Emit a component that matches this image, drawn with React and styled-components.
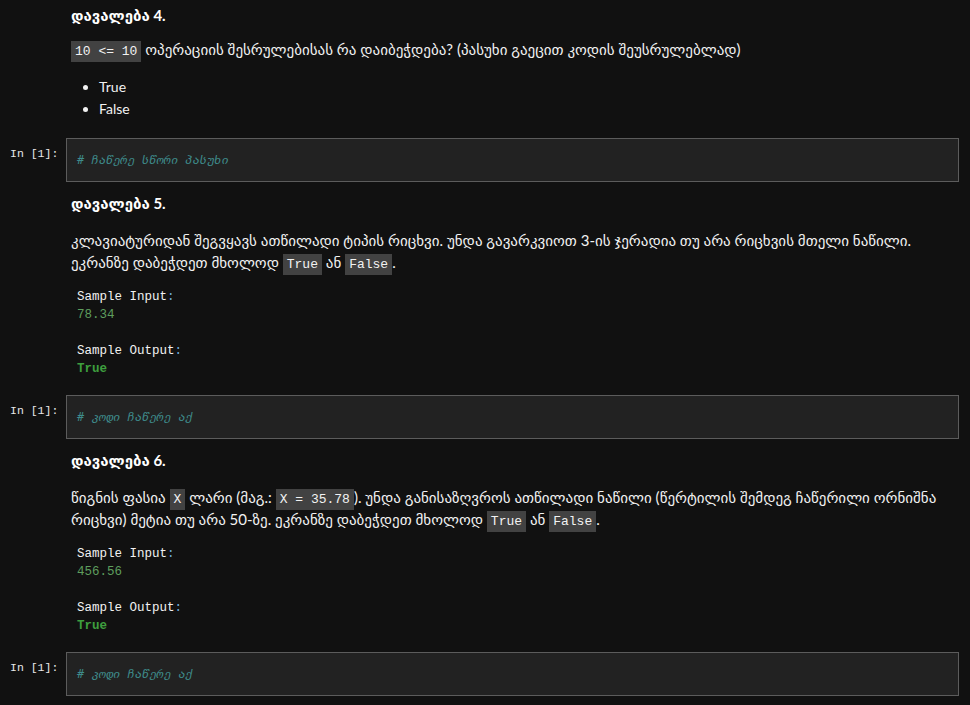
import React from 'react'
import styled, { createGlobalStyle } from 'styled-components'

const GlobalStyle = createGlobalStyle`
  html, body {
    margin: 0;
    padding: 0;
    background: #111111;
  }
  body {
    color: #f2f2f2;
    font-family: Lato, "DejaVu Sans", sans-serif;
    font-size: 14px;
  }
`

const tasks = [
  {
    title: 'დავალება 5.',
    text: () => (
      <>
        კლავიატურიდან შეგვყავს ათწილადი ტიპის რიცხვი. უნდა გავარკვიოთ 3-ის ჯერადია თუ არა რიცხვის მთელი ნაწილი.
        <br />
        ეკრანზე დაბეჭდეთ მხოლოდ <Code>True</Code> ან <Code>False</Code>.
      </>
    ),
    input: '78.34',
    output: 'True',
    comment: '# კოდი ჩაწერე აქ'
  },
  {
    title: 'დავალება 6.',
    text: () => (
      <>
        წიგნის ფასია <Code>X</Code> ლარი (მაგ.: <Code>X = 35.78</Code>). უნდა განისაზღვროს ათწილადი ნაწილი (წერტილის შემდეგ ჩაწერილი ორნიშნა
        <br />
        რიცხვი) მეტია თუ არა 50-ზე. ეკრანზე დაბეჭდეთ მხოლოდ <Code>True</Code> ან <Code>False</Code>.
      </>
    ),
    input: '456.56',
    output: 'True',
    comment: '# კოდი ჩაწერე აქ'
  }
]

function CodeCell({ comment }) {
  return (
    <CodeRow>
      <Prompt>In [1]:</Prompt>
      <InputBox>
        <Comment>{comment}</Comment>
      </InputBox>
    </CodeRow>
  )
}

function Sample({ input, output }) {
  return (
    <Pre>
      <div>Sample Input<Punct>:</Punct></div>
      <NumberLine>{input}</NumberLine>
      <div>&nbsp;</div>
      <div>Sample Output<Punct>:</Punct></div>
      <BoolLine>{output}</BoolLine>
    </Pre>
  )
}

export default function App() {
  return (
    <Notebook>
      <GlobalStyle />

      <Markdown $top={5} $bottom={18}>
        <Heading $gap={13}>დავალება 4.</Heading>
        <Para>
          <Code>10 &lt;= 10</Code> ოპერაციის შესრულებისას რა დაიბეჭდება? (პასუხი გაეცით კოდის შეუსრულებლად)
        </Para>
        <List>
          <li>True</li>
          <li>False</li>
        </List>
      </Markdown>
      <CodeCell comment="# ჩაწერე სწორი პასუხი" />

      {tasks.map((t, i) => (
        <React.Fragment key={i}>
          <Markdown>
            <Heading>{t.title}</Heading>
            <Para>{t.text()}</Para>
            <Sample input={t.input} output={t.output} />
          </Markdown>
          <CodeCell comment={t.comment} />
        </React.Fragment>
      ))}
    </Notebook>
  )
}

const Notebook = styled.div`
  display: flex;
  flex-direction: column;
  width: 970px;
  padding-bottom: 8px;
`

const Markdown = styled.div`
  padding: ${p => p.$top ?? 11}px 11px ${p => p.$bottom ?? 17}px 71px;
`

const Heading = styled.h4`
  margin: 0 0 ${p => p.$gap ?? 16}px;
  font-size: 15px;
  line-height: 20px;
  font-weight: 700;
  color: #ffffff;
`

const Para = styled.p`
  margin: 0;
  font-size: 15px;
  line-height: 22px;
  white-space: nowrap;
`

const Code = styled.code`
  font-family: "Liberation Mono", "DejaVu Sans Mono", monospace;
  font-size: 13px;
  line-height: 1;
  background: #424242;
  padding: 3px 4px 3px;
  color: #f2f2f2;
`

const List = styled.ul`
  margin: 16px 0 0;
  padding-left: 28px;
  line-height: 22px;
  list-style: disc;
`

const Pre = styled.pre`
  margin: 15px 0 0 6px;
  font-family: "Liberation Mono", "DejaVu Sans Mono", monospace;
  font-size: 12.5px;
  line-height: 18px;
  color: #f2f2f2;
`

const Punct = styled.span`
  color: #6fa8dc;
`

const NumberLine = styled.div`
  color: #5e9e5e;
`

const BoolLine = styled.div`
  color: #3e9e3e;
  font-weight: 700;
`

const CodeRow = styled.div`
  display: flex;
  align-items: flex-start;
  height: 44px;
  padding-right: 11px;
`

const Prompt = styled.div`
  width: 56px;
  flex-shrink: 0;
  padding: 8px 0 0 10px;
  font-family: "Liberation Mono", "DejaVu Sans Mono", monospace;
  font-size: 11.5px;
  line-height: 16px;
  color: #e8e8e8;
`

const InputBox = styled.div`
  flex: 1;
  height: 100%;
  box-sizing: border-box;
  display: flex;
  align-items: center;
  padding: 0 10px;
  background: #222222;
  border: 1px solid #5c5c5c;
`

const Comment = styled.span`
  font-family: "DejaVu Sans Mono", monospace;
  font-size: 12px;
  font-style: italic;
  color: #3f8c8c;
`
